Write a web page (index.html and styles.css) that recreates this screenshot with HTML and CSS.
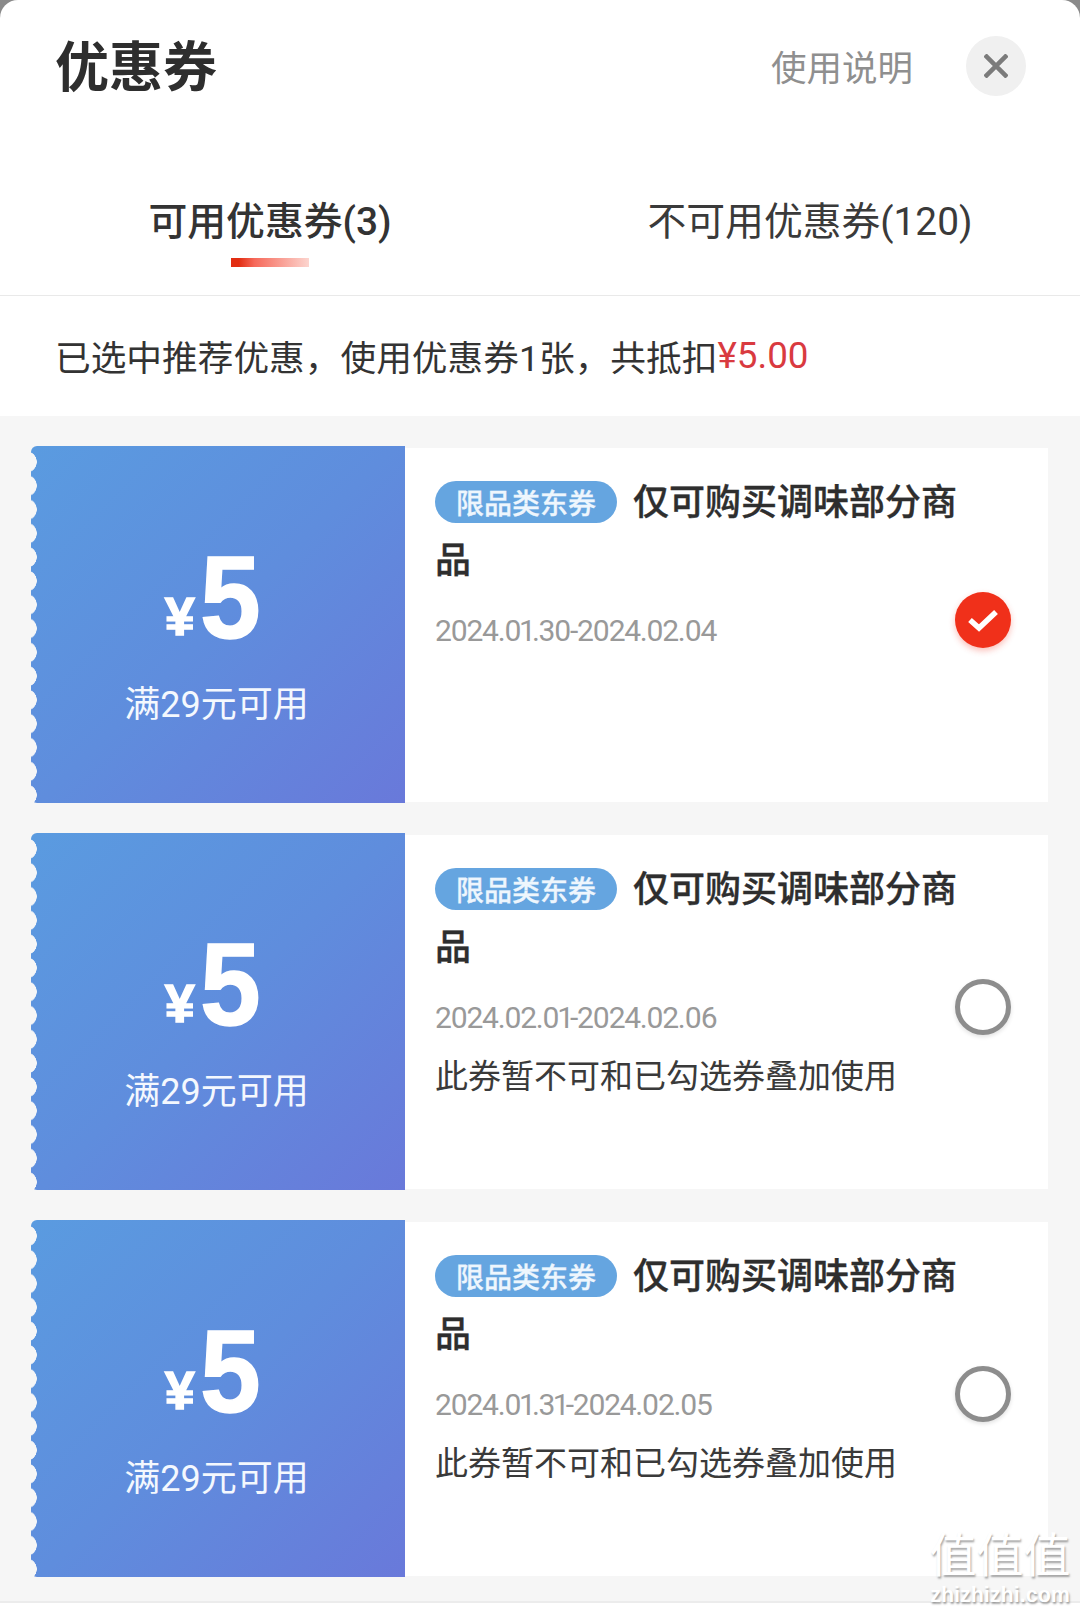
FILE: index.html
```html
<!DOCTYPE html>
<html lang="zh">
<head>
<meta charset="utf-8">
<title>优惠券</title>
<link rel="stylesheet" href="styles.css">
</head>
<body>
<div class="sheet">
  <header class="head">
    <h1 class="head-title">优惠券</h1>
    <span class="head-help">使用说明</span>
    <span class="close">
      <svg viewBox="0 0 24 24" width="24" height="24"><path d="M1 1 23 23M23 1 1 23" stroke="#7b7b7b" stroke-width="4.5" fill="none"/></svg>
    </span>
  </header>
  <nav class="tabs">
    <div class="tab tab-on">可用优惠券(3)<i class="tab-bar"></i></div>
    <div class="tab">不可用优惠券(120)</div>
  </nav>
  <p class="summary">已选中推荐优惠，使用优惠券1张，共抵扣<span class="red">¥5.00</span></p>
  <main class="list">
    <article class="card">
      <div class="ticket">
        <div class="amount"><span class="yen">¥</span><span class="num">5</span></div>
        <div class="cond">满29元可用</div>
      </div>
      <div class="info">
        <div class="content">
          <div class="name"><span class="tag">限品类东券</span>仅可购买调味部分商品</div>
          <div class="date">2024.01.30-2024.02.04</div>
        </div>
        <span class="radio radio-on">
          <svg viewBox="0 0 32 24" width="32" height="24"><path d="M3 12 12 20 29 4" stroke="#fff" stroke-width="5.5" fill="none"/></svg>
        </span>
      </div>
    </article>
    <article class="card">
      <div class="ticket">
        <div class="amount"><span class="yen">¥</span><span class="num">5</span></div>
        <div class="cond">满29元可用</div>
      </div>
      <div class="info">
        <div class="content">
          <div class="name"><span class="tag">限品类东券</span>仅可购买调味部分商品</div>
          <div class="date">2024.02.01-2024.02.06</div>
          <div class="note">此券暂不可和已勾选券叠加使用</div>
        </div>
        <span class="radio"></span>
      </div>
    </article>
    <article class="card">
      <div class="ticket">
        <div class="amount"><span class="yen">¥</span><span class="num">5</span></div>
        <div class="cond">满29元可用</div>
      </div>
      <div class="info">
        <div class="content">
          <div class="name"><span class="tag">限品类东券</span>仅可购买调味部分商品</div>
          <div class="date">2024.01.31-2024.02.05</div>
          <div class="note">此券暂不可和已勾选券叠加使用</div>
        </div>
        <span class="radio"></span>
      </div>
    </article>
  </main>
  <div class="mark">
    <div class="mark-cn">值值值</div>
    <div class="mark-en">zhizhizhi.com</div>
  </div>
</div>
</body>
</html>
```

FILE: styles.css
```css
* { box-sizing: border-box; }
html, body { margin: 0; padding: 0; }
body {
  width: 1080px;
  height: 1609px;
  overflow: hidden;
  background: #8a8a8a;
  font-family: Roboto, "Noto Sans CJK SC", sans-serif;
  color: #333;
}
.sheet {
  position: relative;
  height: 1609px;
  background: #fff;
  border-radius: 18px 18px 0 0;
  overflow: hidden;
}
.head {
  height: 132px;
  display: flex;
  align-items: center;
  padding: 6px 54px 0 55px;
}
.head-title {
  margin: 0;
  flex: 1;
  font-size: 54px;
  font-weight: 700;
  line-height: 70px;
  color: #2e2e2e;
}
.head-help {
  font-size: 35.5px;
  line-height: 50px;
  color: #8f8f8f;
  margin-right: 53px;
}
.close {
  width: 60px;
  height: 60px;
  margin-top: -6px;
  border-radius: 50%;
  background: #f0f0f0;
  display: flex;
  align-items: center;
  justify-content: center;
}
.tabs {
  height: 164px;
  display: flex;
  border-bottom: 1px solid #e9e9e9;
}
.tab {
  flex: 1;
  display: flex;
  flex-direction: column;
  align-items: center;
  padding-top: 61px;
  font-size: 38.8px;
  line-height: 58px;
  color: #3a3a3a;
}
.tab-on {
  font-weight: 500;
  color: #333;
}
.tab-bar {
  display: block;
  width: 78px;
  height: 9px;
  margin-top: 7px;
  background: linear-gradient(90deg, #e22d12 0, #e22d12 10%, #f6695a 30%, #fcd5cf 100%);
}
.summary {
  margin: 0;
  height: 120px;
  padding: 0 0 1px 55px;
  display: flex;
  align-items: center;
  font-size: 35.7px;
  color: #333;
}
.red {
  font-size: 36.8px;
  color: #d93a40;
}
.list {
  height: 1187px;
  background: #f6f6f6;
  padding: 30px 32px 0 31px;
  display: flex;
  flex-direction: column;
  gap: 30px;
  border-bottom: 2px solid #ececec;
}
.card {
  height: 357px;
  display: flex;
}
.ticket {
  position: relative;
  width: 374px;
  padding-right: 3px;
  border-radius: 6px 0 0 6px;
  background: linear-gradient(135deg, #5a9be0 0%, #5f8ddd 50%, #6979da 100%);
  color: #fff;
  display: flex;
  flex-direction: column;
  align-items: center;
}
.ticket::before {
  content: "";
  position: absolute;
  left: 0;
  top: 0;
  bottom: 0;
  width: 6px;
  background: radial-gradient(circle at -5px 50%, #f6f6f6 10.5px, transparent 11px) 0 4px / 6px 23.8px repeat-y;
}
.amount {
  height: 120px;
  margin-top: 92px;
  font-family: "Liberation Sans", Arial, sans-serif;
  font-weight: 700;
  line-height: 120px;
  white-space: nowrap;
  -webkit-text-stroke: 1.5px #fff;
}
.yen {
  font-size: 54px;
  margin: 0 5px 0 -4px;
  vertical-align: 3px;
}
.num {
  display: inline-block;
  font-size: 116px;
  transform: scaleX(.94);
  transform-origin: left center;
}
.cond {
  margin-top: 22px;
  font-size: 36px;
  line-height: 50px;
  color: #f4f8fe;
}
.info {
  flex: 1;
  margin: 2px 0 1px;
  background: #fff;
  display: flex;
  align-items: center;
  padding: 0 37px 0 30px;
}
.content {
  flex: 1;
  align-self: flex-start;
  padding-top: 26px;
}
.name {
  font-size: 36px;
  font-weight: 500;
  line-height: 58px;
  color: #2e2e2e;
  -webkit-text-stroke: .35px #2e2e2e;
}
.tag {
  display: inline-block;
  vertical-align: 1px;
  height: 42px;
  width: 182px;
  margin-right: 16px;
  border-radius: 21px;
  background: #65a5e0;
  color: #eef6fd;
  font-size: 28px;
  font-weight: 500;
  line-height: 47px;
  text-align: center;
  -webkit-text-stroke: .3px #eef6fd;
}
.date {
  margin-top: 21px;
  font-size: 30px;
  line-height: 40px;
  letter-spacing: -1.35px;
  font-weight: 400;
  font-variant-numeric: proportional-nums;
  color: #999;
}
.note {
  margin-top: 19px;
  font-size: 33px;
  line-height: 40px;
  color: #3a3a3a;
}
.radio {
  flex: none;
  width: 56px;
  height: 56px;
  margin: 0 0 11px -10px;
  border-radius: 50%;
  border: 5px solid #8d8d8d;
  background: #fff;
  box-shadow: 0 2px 4px rgba(0, 0, 0, .12);
  display: flex;
  align-items: center;
  justify-content: center;
}
.radio-on {
  border: 0;
  background: #f0301a;
  box-shadow: 0 3px 6px rgba(240, 48, 26, .3);
}
.mark {
  position: absolute;
  left: 928px;
  top: 1521px;
  width: 144px;
  color: #fff;
  text-align: center;
  text-shadow: 1px 2px 2px rgba(0, 0, 0, .35);
}
.mark-cn {
  font-family: "Noto Sans CJK SC", sans-serif;
  font-size: 47px;
  line-height: 62px;
}
.mark-en {
  font-family: "Liberation Sans", Arial, sans-serif;
  font-size: 21.5px;
  font-weight: 700;
  line-height: 24px;
  white-space: nowrap;
}
```
